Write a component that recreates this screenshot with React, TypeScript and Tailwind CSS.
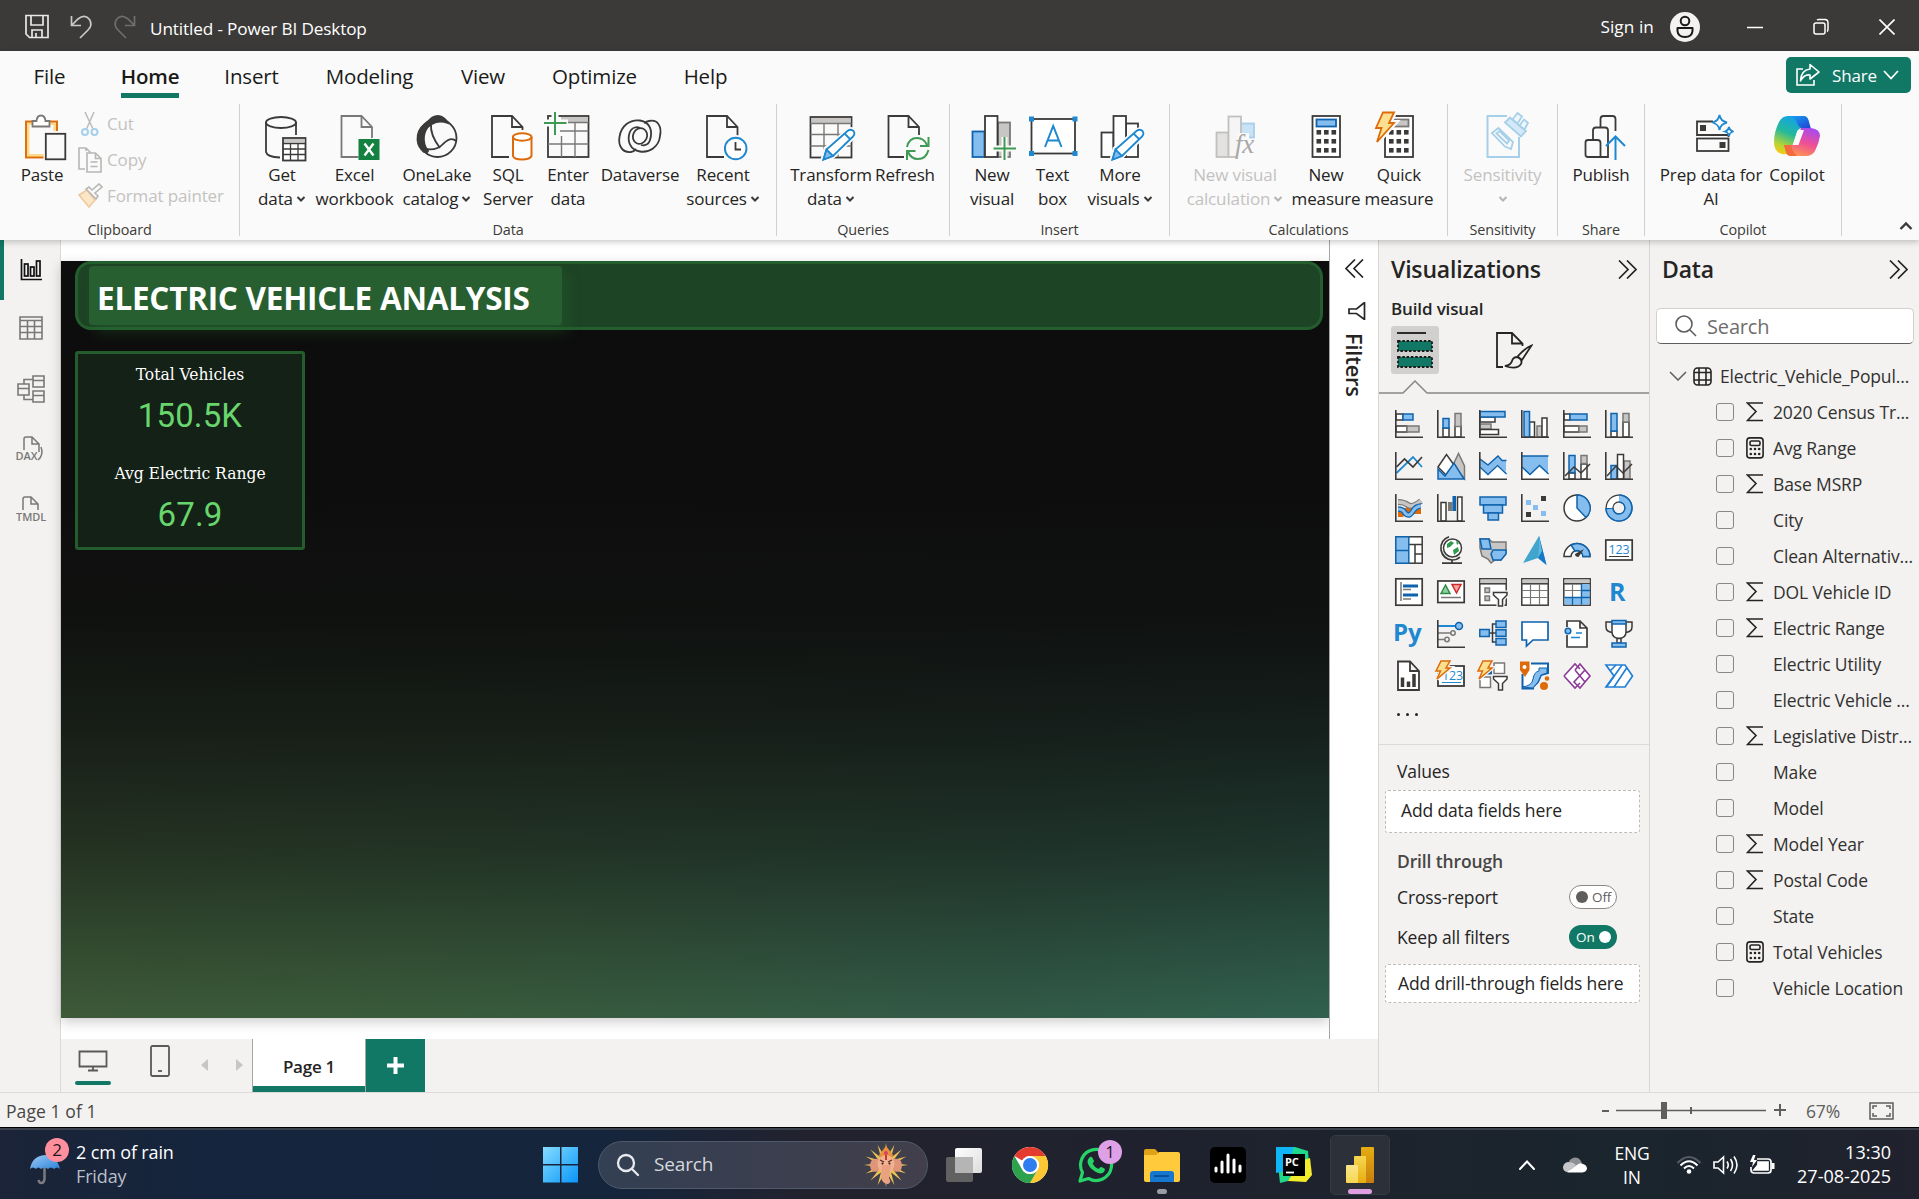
import React from "react";

type P = { children?: React.ReactNode };

const INK = "#3b3a39";
const BLUE = "#0f63ad";
const SKY = "#85beee";
const MID = "#1e88d0";
const GREY = "#7a7876";
const SILVER = "#c8c6c4";
const ORANGE = "#dd6b0a";

/* ---------- ribbon icons, 48 x 52 box ---------- */

const R = ({ children }: P) => (
  <svg width="48" height="52" viewBox="0 0 48 52" fill="none" stroke={INK} strokeWidth="1.8" className="shrink-0 overflow-visible">
    {children}
  </svg>
);

const Doc = ({ x, color = INK }: { x: number; color?: string }) => (
  <g stroke={color}>
    <path d={`M${x + 17} 46H${x}V5H${x + 20}L${x + 30.5} 16V27`} fill="none" />
    <path d={`M${x + 20} 5V16H${x + 30.5}`} />
  </g>
);

const Pencil = () => (
  <g>
    <path d="M16 49L19 38L41 20Q45 17 47 20Q49 23 46 26L26 45Z" fill="#fafafa" stroke="#fafafa" strokeWidth="5" />
    <path d="M16.500 48.500L19.500 38.500L40.500 20Q44 17.500 46.500 20Q48.500 23 46 25.500L26 45Z" fill="#fff" stroke={MID} strokeWidth="1.8" />
    <path d="M16.500 48.500L19.500 38.500L26 45Z" fill={SKY} stroke={MID} />
    <path d="M37.500 22.500L43.500 28.500" stroke={MID} />
  </g>
);

const PasteIcon = () => (
  <R>
    <rect x="9.500" y="12" width="28" height="33" fill="#fafafa" stroke="#fbd98b" strokeWidth="4" />
    <rect x="8" y="10.500" width="31" height="36" stroke={ORANGE} strokeWidth="1.900" />
    <path d="M14.500 15.500V10H18.500Q19 4.500 23 4.500T27.500 10H31.500V15.500Z" fill="#fff" stroke={GREY} />
    <rect x="25.500" y="20" width="24" height="31" fill="#fafafa" stroke="none" />
    <rect x="27.800" y="22.800" width="19.500" height="25.500" fill="#fafafa" />
  </R>
);
const GetDataIcon = () => (
  <R>
    <path d="M8 11V41Q9 46 22 46.500M38 11V24" />
    <ellipse cx="23" cy="11.500" rx="15" ry="5.500" />
    <rect x="25" y="27" width="22.500" height="22.500" fill="#fff" />
    <rect x="26" y="28" width="20.500" height="3.500" fill={SILVER} stroke="none" />
    <path d="M25 32.500H47.500M25 38H47.500M25 43.500H47.500M32.500 32.500V49M40 32.500V49" strokeWidth="1.300" />
  </R>
);
const ExcelIcon = () => (
  <R>
    <Doc x={10.5} color={GREY} />
    <rect x="27.500" y="28" width="21" height="21" fill="#13813f" stroke="none" />
    <path d="M33.500 32.500L42.500 44.500M42.500 32.500L33.500 44.500" stroke="#fff" strokeWidth="2.400" />
  </R>
);
const OneLakeIcon = () => (
  <R>
    <circle cx="24.500" cy="27" r="19" fill="#fafafa" />
    <path d="M14 12Q19 5 25 5Q32 6 34.500 12Q26 9 19 13Q14 16 12.500 19Z" fill={INK} />
    <path d="M12 13Q4 19 4.500 29Q5 36 11 41Q14 42 15 40Q10 34 11 25Q12 18 17 13Z" fill={INK} />
    <path d="M18 13Q17 24 27 37M12 38Q24 40 30 33Q38 25 43 30" />
  </R>
);
const SqlIcon = () => (
  <R>
    <Doc x={8} />
    <rect x="26" y="19" width="24" height="32" fill="#fafafa" stroke="none" />
    <path d="M29 26V45Q30 48.500 38 48.500T47.500 45V26" fill="#fff" stroke={ORANGE} strokeWidth="2" />
    <ellipse cx="38.200" cy="26" rx="9.300" ry="3.700" fill="#fff" stroke={ORANGE} strokeWidth="2" />
  </R>
);
const EnterIcon = () => (
  <R>
    <rect x="4" y="5" width="40.500" height="41" fill="#fafafa" />
    <rect x="17" y="6" width="27" height="5" fill={SILVER} stroke="none" />
    <path d="M4 33H44.500M16 20H44.500M17.500 25V46M31 12V46M17 11.500H44.500" stroke={GREY} strokeWidth="1.400" />
    <path d="M-1 12H24M11 0V26" stroke="#fafafa" strokeWidth="7" />
    <path d="M0 12H22.500M11 1V24" stroke="#3f9b54" strokeWidth="2" />
  </R>
);
const DataverseIcon = () => (
  <R>
    <g strokeWidth="1.800">
      <path d="M15 41C6 42 2 34 3.500 26C5 15 14 8 24 9.500C34 11 37 20 34 29C32 36 25 34 25 34" />
      <path d="M33 10C42 8 46 16 44 25C43 36 33 42 24 40.500C14 39 11 30 13.500 22C16 15 22 16 24 17" />
      <ellipse cx="24" cy="25" rx="7" ry="8" transform="rotate(25 24 25)" />
      <path d="M15 41C18 41 19 39 20 38M33 10C30 10 29 12 28.500 12.500" />
    </g>
  </R>
);
const RecentIcon = () => (
  <R>
    <Doc x={8} />
    <circle cx="36.700" cy="37.500" r="11" fill="#fff" stroke="#fafafa" strokeWidth="5" />
    <circle cx="36.700" cy="37.500" r="10.800" fill="#fff" stroke={MID} strokeWidth="1.900" />
    <path d="M36.500 31V38.500H42" />
  </R>
);
const TransformIcon = () => (
  <R>
    <rect x="3.500" y="6" width="41" height="40.500" fill="#fafafa" />
    <rect x="4.500" y="7" width="39" height="5" fill={SILVER} stroke="none" />
    <path d="M3.500 12.500H44.500M3.500 23.500H44.500M3.500 35H44.500M17 13V46M31 13V46" stroke={GREY} strokeWidth="1.400" />
    <Pencil />
  </R>
);
const RefreshIcon = () => (
  <R>
    <Doc x={7.5} />
    <rect x="23" y="24" width="27" height="28" fill="#fafafa" stroke="none" />
    <g stroke="#3f9b54" strokeWidth="2">
      <path d="M26 36Q28 27 36 27Q43 27 46 34M47.500 26V35H39" />
      <path d="M47.500 39Q45 48 37 48Q30 48 27 41M26 49V40H34.500" />
    </g>
  </R>
);
const NewVisualIcon = () => (
  <R>
    <rect x="30" y="11.500" width="12" height="34.500" fill={SILVER} stroke={GREY} />
    <rect x="4.500" y="20.500" width="12" height="25.500" fill={SKY} stroke={BLUE} />
    <rect x="17" y="5" width="12.500" height="41" fill="#fff" />
    <path d="M25 37.500H49M36.500 26V49" stroke="#fafafa" strokeWidth="6" />
    <path d="M25.500 37.500H48M36.500 26V49" stroke="#3f9b54" strokeWidth="2" />
  </R>
);
const TextBoxIcon = () => (
  <R>
    <rect x="2.500" y="8" width="43.500" height="34.500" fill="#fff" />
    {[[0, 5.5], [43.5, 5.5], [0, 40], [43.5, 40]].map(([x, y]) => (
      <rect key={`${x}-${y}`} x={x} y={y} width="5" height="5" fill={MID} stroke="none" />
    ))}
    <path d="M16 36L24.200 15L32.500 36M19 29.500H29.500" stroke={MID} strokeWidth="2" />
  </R>
);
const MoreVisualsIcon = () => (
  <R>
    <rect x="30" y="12.500" width="12" height="33.500" fill="#fff" />
    <rect x="5.500" y="21.500" width="12" height="24.500" fill="#fff" />
    <rect x="17.500" y="5" width="12.500" height="41" fill="#fff" />
    <Pencil />
  </R>
);
const VisualCalcIcon = () => (
  <R>
    <rect x="30" y="12.500" width="13" height="14" fill="#c8e2f6" stroke="#a9cfea" />
    <rect x="5.500" y="21.500" width="12" height="24.500" fill="#e3e2e1" stroke="#c1c0bf" />
    <rect x="17.500" y="5.500" width="12.500" height="40.500" fill="#f5f5f5" stroke="#c1c0bf" />
    <rect x="26" y="22" width="12" height="26" fill="#fafafa" stroke="none" />
    <text x="24" y="42" fontFamily="Liberation Serif" fontStyle="italic" fontSize="27" fill="#a9a8a7" stroke="none">fx</text>
  </R>
);
const Keys = ({ x, w }: { x: number; w: number }) => (
  <g fill={INK} stroke="none">
    {[19, 28, 37].map((y) => [0, 1, 2].map((c) => <rect key={`${y}-${c}`} x={x + c * w} y={y} width="4.600" height="4.600" />))}
  </g>
);
const MeasureIcon = () => (
  <R>
    <rect x="10.500" y="5" width="27.500" height="41" fill="#fff" />
    <rect x="14.500" y="8.500" width="19.500" height="7" fill={SKY} stroke={BLUE} />
    <Keys x={14.5} w={7.5} />
  </R>
);
const QuickIcon = () => (
  <R>
    <rect x="10" y="5" width="28" height="41" fill="#fff" />
    <rect x="18" y="8.500" width="15.500" height="7" fill={SILVER} stroke={GREY} />
    <Keys x={14} w={7.5} />
    <path d="M8 1.500H19L14 12H19L2 31L6.500 17H1Z" fill="#fafafa" stroke="#fafafa" strokeWidth="6" />
    <path d="M8 1.500H19L14 12H19L2 31L6.500 17H1Z" fill="#fde08f" stroke={ORANGE} strokeWidth="1.800" />
  </R>
);
const SensitivityIcon = () => (
  <R>
    <g stroke="#a6cfe9">
      <path d="M28 5H8.500V46H40V26" strokeWidth="2" />
      <path d="M13 22L19.500 17L34 31L32 38L26 35.500Z" fill="#fafafa" />
      <path d="M17.500 22.500L20.500 20L30 29.500L28 32.500Z" />
      <path d="M26 11.500L31 6.500L47 20L42 25.500Z" fill="#d3e9f7" />
      <path d="M33.500 8.500L38.500 2L43 5.500L38.500 12.500ZM40.500 14.500L45 8.500L49 12L45.500 18.500Z" fill="#eef7fd" />
    </g>
  </R>
);
const PublishIcon = () => (
  <R>
    <path d="M31 46H11Q8.500 46 8.500 43.500V31.500Q8.500 29 11 29H20.500Q23.500 29 23.500 32V46" />
    <path d="M16 28.500V19.500Q16 16.500 19 16.500H28Q31 16.500 31 19.500V46H24" />
    <path d="M23.500 16V8Q23.500 5 26.500 5H35.500Q38.500 5 38.500 8V20" />
    <path d="M38.500 49V26M29 35L38.500 25.500L48 35" stroke={MID} strokeWidth="2" />
  </R>
);
const PrepIcon = () => (
  <R>
    <path d="M26 10.500H10V24H41.500V26" />
    <rect x="10" y="27.500" width="31.500" height="12.500" />
    <rect x="13" y="14" width="6" height="6" fill={INK} stroke="none" />
    <rect x="32.500" y="31" width="6" height="6" fill={INK} stroke="none" />
    <path d="M32.500 4Q33.500 10 40 11.500Q33.500 13 32.500 19Q31.500 13 25.500 11.500Q31.500 10 32.500 4Z" fill="#fff" stroke={MID} />
    <path d="M42 16Q42.500 19.500 46.500 20.500Q42.500 21.500 42 25Q41.500 21.500 38 20.500Q41.500 19.500 42 16Z" fill="#fff" stroke={MID} />
  </R>
);
const CopilotIcon = () => (
  <svg width="48" height="52" viewBox="0 0 48 52" className="shrink-0">
    <defs>
      <linearGradient id="cpA" x1="0.600" y1="0" x2="0.200" y2="1">
        <stop offset="0" stopColor="#12a0f0" /><stop offset="0.450" stopColor="#25b99b" /><stop offset="0.800" stopColor="#b9d432" /><stop offset="1" stopColor="#f8c90f" />
      </linearGradient>
      <linearGradient id="cpB" x1="0.700" y1="0" x2="0.300" y2="1">
        <stop offset="0" stopColor="#a749f2" /><stop offset="0.500" stopColor="#ee4f95" /><stop offset="1" stopColor="#ff9a4e" />
      </linearGradient>
      <linearGradient id="cpC" x1="0" y1="0" x2="1" y2="1">
        <stop offset="0" stopColor="#18a5f4" /><stop offset="1" stopColor="#1e3fd0" />
      </linearGradient>
    </defs>
    <path d="M15 5H31Q34 5 35 9L37 17H30Q25 17 23.500 22L18 41Q15 44 9 43Q1 41 1 31Q1 21 6 11Q9 5 15 5Z" fill="url(#cpA)" />
    <path d="M15 5H30Q34 5 35.500 9L38 18H31Q26 17 24 12Q22 6 15 5Z" fill="url(#cpC)" />
    <path d="M33 45H18Q14 45 13 41L11 34H18Q23 33 24.500 28L28 17H38Q47 18 47 25Q46 32 42 40Q39 45 33 45Z" fill="url(#cpB)" />
    <path d="M11 34H18Q19 40 24 45H18Q14 45 13 41Z" fill="#f36a3c" />
    <path d="M25 19H31L25.500 34H19.500Z" fill="#fafafa" />
  </svg>
);

const Caret = ({ muted = false }: { muted?: boolean }) => (
  <svg width="10" height="8" viewBox="0 0 10 8" fill="none" stroke={muted ? "#b5b4b3" : INK} strokeWidth="2" className="shrink-0">
    <path d="M1.500 2L5 5.500L8.500 2" />
  </svg>
);

type Cmd = { w: string; icon: React.ReactNode; l1: string; l2?: string; caret?: boolean; muted?: boolean };

const Command = ({ w, icon, l1, l2, caret, muted }: Cmd) => (
  <div className={`flex shrink-0 flex-col items-center whitespace-nowrap text-[17px] leading-6 ${w} ${muted ? "text-[#c4c2c0]" : "text-[#252423]"}`}>
    {icon}
    <div>{l1}</div>
    {(l2 || caret) && (
      <div className="flex h-6 items-center gap-[3px]">
        {l2}
        {caret && <Caret muted={muted} />}
      </div>
    )}
  </div>
);

const Group = ({ w, pad = "", label, children }: P & { w: string; pad?: string; label: string }) => (
  <section className={`flex h-[132px] shrink-0 flex-col border-r border-[#d2d0ce] ${w}`}>
    <div className={`flex h-[119px] pt-[7px] ${pad}`}>{children}</div>
    <div className="flex h-[13px] items-center justify-center text-[14.400px] text-[#3b3a39]">{label}</div>
  </section>
);

const CutIcon = () => (
  <svg width="26" height="26" viewBox="0 0 26 26" fill="none" strokeWidth="1.500">
    <path d="M8 1L16 18M17 1L9.500 18" stroke="#bdbbb9" />
    <circle cx="8" cy="21" r="3" stroke="#a6cfe9" strokeWidth="2" /><circle cx="17.500" cy="21" r="3" stroke="#a6cfe9" strokeWidth="2" />
  </svg>
);
const CopyIcon = () => (
  <svg width="26" height="26" viewBox="0 0 26 26" fill="none" stroke="#b9b7b5" strokeWidth="1.600">
    <path d="M8 22H2V1H9L13 5V6M9 1V4" />
    <path d="M10 6H18.500L24 11.500V25H10ZM18.500 6V11.500H24M13.500 15H20.500M13.500 19.500H20.500" fill="#fafafa" />
  </svg>
);
const PainterIcon = () => (
  <svg width="26" height="26" viewBox="0 0 26 26" fill="none" strokeWidth="1.600">
    <path d="M2 12L12 24L18 17L10 7Z" fill="#fbe7c6" stroke="#f0c8a2" />
    <path d="M9 6L19 16L21 13L18 10L25 4L22 1L15 7L12 4Z" fill="#fafafa" stroke="#b9b7b5" />
  </svg>
);

const Ribbon = () => (
  <div className="flex h-[138px] items-start">
    <Group w="w-[240px]" pad="pl-[10px]" label="Clipboard">
      <Command w="w-16" icon={<PasteIcon />} l1="Paste" />
      <div className="flex flex-col gap-[10px] pl-[3px] text-[17px] text-[#c4c2c0]">
        <div className="flex h-[26px] items-center gap-1"><CutIcon />Cut</div>
        <div className="flex h-[26px] items-center gap-1"><CopyIcon />Copy</div>
        <div className="flex h-[26px] items-center gap-1 whitespace-nowrap"><PainterIcon />Format painter</div>
      </div>
    </Group>
    <Group w="w-[537px]" pad="pl-[6px]" label="Data">
      <Command w="w-[72px]" icon={<GetDataIcon />} l1="Get" l2="data" caret />
      <Command w="w-[73px]" icon={<ExcelIcon />} l1="Excel" l2="workbook" />
      <Command w="w-[92px]" icon={<OneLakeIcon />} l1="OneLake" l2="catalog" caret />
      <Command w="w-[50px]" icon={<SqlIcon />} l1="SQL" l2="Server" />
      <Command w="w-[70px]" icon={<EnterIcon />} l1="Enter" l2="data" />
      <Command w="w-[74px]" icon={<DataverseIcon />} l1="Dataverse" />
      <Command w="w-[92px]" icon={<RecentIcon />} l1="Recent" l2="sources" caret />
    </Group>
    <Group w="w-[173px]" pad="pl-[10px]" label="Queries">
      <Command w="w-[88px]" icon={<TransformIcon />} l1="Transform" l2="data" caret />
      <Command w="w-[60px]" icon={<RefreshIcon />} l1="Refresh" />
    </Group>
    <Group w="w-[220px]" pad="pl-3" label="Insert">
      <Command w="w-[60px]" icon={<NewVisualIcon />} l1="New" l2="visual" />
      <Command w="w-[61px]" icon={<TextBoxIcon />} l1="Text" l2="box" />
      <Command w="w-[74px]" icon={<MoreVisualsIcon />} l1="More" l2="visuals" caret />
    </Group>
    <Group w="w-[278px]" pad="pl-[10px]" label="Calculations">
      <Command w="w-[110px]" icon={<VisualCalcIcon />} l1="New visual" l2="calculation" caret muted />
      <Command w="w-[72px]" icon={<MeasureIcon />} l1="New" l2="measure" />
      <Command w="w-[74px]" icon={<QuickIcon />} l1="Quick" l2="measure" />
    </Group>
    <Group w="w-[110px]" label="Sensitivity">
      <Command w="w-[109px]" icon={<SensitivityIcon />} l1="Sensitivity" caret muted />
    </Group>
    <Group w="w-[87px]" label="Share">
      <Command w="w-[86px]" icon={<PublishIcon />} l1="Publish" />
    </Group>
    <Group w="w-[197px]" pad="pl-[9px]" label="Copilot">
      <Command w="w-[114px]" icon={<PrepIcon />} l1="Prep data for" l2="AI" />
      <Command w="w-[58px]" icon={<CopilotIcon />} l1="Copilot" />
    </Group>
    <div className="flex flex-1 justify-end pt-[117px] pr-[6px]">
      <svg width="14" height="10" viewBox="0 0 14 10" fill="none" stroke={INK} strokeWidth="2.400"><path d="M1.500 8L7 2.500L12.500 8" /></svg>
    </div>
  </div>
);

const tabs = [
  { name: "File", w: "w-[99px]" },
  { name: "Home", w: "w-[102px]" },
  { name: "Insert", w: "w-[101px]" },
  { name: "Modeling", w: "w-[135px]" },
  { name: "View", w: "w-[92px]" },
  { name: "Optimize", w: "w-[131px]" },
  { name: "Help", w: "w-[91px]" },
];

const TitleBar = () => (
  <header className="flex h-[51px] shrink-0 items-center bg-[#3b3a38] text-[17.200px] text-white">
    <svg width="115" height="30" viewBox="0 0 115 30" fill="none" stroke="#e8e8e8" strokeWidth="1.700" className="ml-6">
      <path d="M2 4.500H24V26.500H5.500L2 23ZM7 4.500V14H19V4.500M8 26.500V19H18V26.500M12 26V22" />
      <path d="M47.500 5V14.500H57M48 14L54 8Q61 2.500 65.500 8.500Q69 14 64 19L56 27" stroke="#c9c9c9" />
      <path d="M110.500 5V14.500H101M110 14L104 8Q97 2.500 92.500 8.500Q89 14 94 19L102 27" stroke="#6f6e6d" />
    </svg>
    <div className="ml-[11px] pt-[7px]">Untitled - Power BI Desktop</div>
    <div className="ml-auto flex items-center pt-0.5">
      <span className="tracking-[0.005em]!">Sign in</span>
      <svg width="30" height="30" viewBox="0 0 30 30" className="ml-4">
        <circle cx="15" cy="15" r="15" fill="#f3f2f1" />
        <circle cx="15" cy="9" r="4.300" fill="none" stroke="#1b1a19" strokeWidth="2" />
        <path d="M7.500 16H22.500V19Q22 25 15 25T7.500 19Z" fill="none" stroke="#1b1a19" strokeWidth="2" strokeLinejoin="round" />
      </svg>
      <svg width="16" height="16" viewBox="0 0 16 16" stroke="#fff" strokeWidth="1.500" className="ml-[47px]"><path d="M0 8.500H16" /></svg>
      <svg width="16" height="18" viewBox="0 0 16 18" fill="none" stroke="#fff" strokeWidth="1.500" className="ml-[50px]">
        <rect x="1" y="5" width="11" height="11" rx="2" /><path d="M4 2Q4.500 1.500 6 1.500H12Q15 1.500 15 5V11Q15 13 14 13.500" />
      </svg>
      <svg width="16" height="16" viewBox="0 0 16 16" stroke="#fff" strokeWidth="1.600" className="mr-6 ml-[50px]"><path d="M0.500 0.500L15.500 15.500M15.500 0.500L0.500 15.500" /></svg>
    </div>
  </header>
);

const TabBar = () => (
  <nav className="flex h-[54px] items-start text-[20.500px] text-[#1b1a19]">
    {tabs.map((t) => (
      <div key={t.name} className={`flex flex-col items-center ${t.w}`}>
        <span className={`flex h-[42px] items-center pt-[8px] ${t.name === "Home" ? "font-semibold" : ""}`}>{t.name}</span>
        {t.name === "Home" && <div className="h-[5px] w-[58px] bg-[#117865]" />}
      </div>
    ))}
    <button className="mt-[6px] mr-[8px] ml-auto flex h-9 w-[125px] items-center rounded-[5px] bg-[#117865] pl-[10px] text-[17px] text-white">
      <svg width="24" height="24" viewBox="0 0 24 24" fill="none" stroke="#fff" strokeWidth="1.600">
        <path d="M7 6H1V22H18V17" /><path d="M14 1.500L23 9L14 16V12Q8 11 4.500 18Q5 7 14 6Z" strokeLinejoin="round" />
      </svg>
      <span className="ml-[12px] pt-px">Share</span>
      <svg width="16" height="10" viewBox="0 0 16 10" fill="none" stroke="#fff" strokeWidth="1.800" className="ml-[6px]"><path d="M1 1L8 8.500L15 1" /></svg>
    </button>
  </nav>
);

/* ---------- left rail ---------- */

const Rail = () => (
  <aside className="flex w-[61px] shrink-0 flex-col border-r border-[#dcdad8] bg-[#f3f2f1]">
    <div className="flex h-[60px] items-center justify-center border-l-4 border-[#117865] pr-[3px] pb-px">
      <svg width="22" height="22" viewBox="0 0 22 22" fill="none" stroke="#111" strokeWidth="1.700">
        <path d="M1.500 0V20.500H22" /><rect x="4.500" y="5" width="3.500" height="12" /><rect x="10.500" y="8" width="3.500" height="9" /><rect x="16.500" y="2" width="3.500" height="15" />
      </svg>
    </div>
    <div className="flex h-[60px] items-center justify-center pb-1 pl-0.5">
      <svg width="24" height="24" viewBox="0 0 24 24" fill="none" stroke={GREY} strokeWidth="1.600">
        <path d="M1 1H23V23H1ZM1 4.500H23M1 10.500H23M1 16.500H23M8.500 4V23M15.500 4V23" />
      </svg>
    </div>
    <div className="flex h-[60px] items-center justify-center pb-[3px] pl-0.5">
      <svg width="28" height="28" viewBox="0 0 28 28" fill="none" stroke={GREY} strokeWidth="1.600">
        <path d="M1 9H12V20H1ZM1 13.500H12M16 1H27V12H16ZM16 5.500H27M16 16H27V27H16ZM16 20.500H27M7 9V4.500H16M7 20V24.500H16" />
      </svg>
    </div>
    <div className="flex h-[60px] items-center justify-center pb-0.5">
      <svg width="28" height="28" viewBox="0 0 28 28" fill="none" stroke={GREY} strokeWidth="1.500" className="overflow-visible">
        <path d="M8 15V4Q8 2 10 2H16L23 9V17M16 2V9H23M25 12Q28 20 22 25" />
        <text x="-0.500" y="25" fontFamily="Open Sans" fontSize="11" fontWeight="600" fill={GREY} stroke="none">DAX</text>
      </svg>
    </div>
    <div className="flex h-[60px] items-center justify-center pb-[3px]">
      <svg width="30" height="28" viewBox="0 0 30 28" fill="none" stroke={GREY} strokeWidth="1.500" className="overflow-visible">
        <path d="M8 15V4Q8 2 10 2H16L23 9V15M16 2V9H23" />
        <text x="1" y="25.500" fontFamily="Open Sans" fontSize="11" fontWeight="600" fill={GREY} stroke="none">TMDL</text>
      </svg>
    </div>
  </aside>
);

/* ---------- report canvas ---------- */

const Stat = ({ label, value }: { label: string; value: string }) => (
  <div className="flex h-[99px] shrink-0 flex-col items-center">
    <div className="h-[26px] font-['DejaVu_Serif_Condensed','DejaVu_Serif',serif] text-[17.300px] leading-[26px] tracking-[0]! text-white">{label}</div>
    <div className="mt-[7px] h-[44px] font-['Roboto',sans-serif] text-[33px] leading-[44px] tracking-[0.004em]! text-[#68d56d]">{value}</div>
  </div>
);

const Canvas = () => (
  <div className="h-[799px] bg-white py-[21px]">
    <div className="flex h-[757px] flex-col bg-[linear-gradient(to_bottom,#0d0d0d_0%,#0d0d0d_30%,rgba(13,13,13,0.940)_48%,rgba(13,13,13,0.790)_62%,rgba(13,13,13,0.540)_78%,rgba(13,13,13,0.250)_91%,rgba(13,13,13,0.060)_100%),linear-gradient(to_right,#405f3b_0%,#3b6040_35%,#345f4b_75%,#336653_100%)] pl-[14px] shadow-[0_4px_12px_rgba(0,0,0,0.200)]">
      <div className="flex h-[69px] w-[1248px] items-center rounded-[16px] border-[3px] border-[#245e2e] bg-[#1d4425] pl-[11px]">
        <div className="flex h-[59px] w-[473px] items-center rounded-[4px] bg-[#275f30] pt-1 pl-[8px] text-[31.500px] font-bold tracking-[-0.008em]! whitespace-nowrap text-white shadow-[6px_8px_14px_rgba(39,110,50,0.300)]">
          ELECTRIC VEHICLE ANALYSIS
        </div>
      </div>
      <div className="mt-[21px] flex h-[199px] w-[230px] flex-col rounded-[3px] border-[3px] border-[#245c2d] bg-[#142116] pt-[7px]">
        <Stat label="Total Vehicles" value="150.5K" />
        <Stat label="Avg Electric Range" value="67.9" />
      </div>
    </div>
  </div>
);

const PageTabs = () => (
  <div className="flex h-[53px] bg-[#f3f2f1]">
    <div className="flex w-[191px] shrink-0 items-start">
      <div className="ml-[14px] flex w-9 flex-col items-center pt-[11px]">
        <svg width="30" height="22" viewBox="0 0 30 22" fill="none" stroke="#5b5957" strokeWidth="1.800"><path d="M1.500 1.500H28.500V16.500H1.500ZM10 20.500H20M15 17V20" /></svg>
        <div className="mt-[9px] h-1 w-9 rounded-sm bg-[#117865]" />
      </div>
      <svg width="20" height="32" viewBox="0 0 20 32" fill="none" stroke="#5b5957" strokeWidth="1.800" className="mt-[6px] ml-[39px]"><rect x="1" y="1" width="18" height="30" rx="1.500" /><path d="M8 26H12" /></svg>
      <svg width="42" height="12" viewBox="0 0 42 12" fill="#c8c6c4" className="mt-[20px] ml-[31px]"><path d="M7 0V12L0 6ZM35 0V12L42 6Z" /></svg>
    </div>
    <div className="flex w-[114px] flex-col border-x border-[#a8a6a4] bg-white">
      <div className="flex h-[47px] items-center justify-center pt-[8px] text-[17px] font-semibold tracking-[-0.015em]! text-[#252423]">Page 1</div>
      <div className="h-[6px] bg-[#117865]" />
    </div>
    <div className="flex w-[59px] items-center justify-center bg-[#117865]">
      <svg width="17" height="17" viewBox="0 0 17 17" stroke="#fff" strokeWidth="4"><path d="M8.500 0V17M0 8.500H17" /></svg>
    </div>
  </div>
);

/* ---------- right panes ---------- */

const Chevrons = ({ flip = false }: { flip?: boolean }) => (
  <svg width="19" height="19" viewBox="0 0 19 19" fill="none" stroke="#252423" strokeWidth="1.700" className={flip ? "rotate-180" : ""}>
    <path d="M1 0.500L10 9.500L1 18.500M9 0.500L18 9.500L9 18.500" />
  </svg>
);

const Filters = () => (
  <div className="flex w-[49px] shrink-0 flex-col items-center border-l-[1.500px] border-[#a8a6a4] bg-white pt-[19px]">
    <Chevrons flip />
    <svg width="18" height="18" viewBox="0 0 18 18" fill="none" stroke="#252423" strokeWidth="1.700" className="mt-[24px] ml-[6px]">
      <path d="M16.500 0.500V17.500L8.500 11.500H1V7H8.500Z" />
    </svg>
    <div className="mt-[13px] text-[21.800px] leading-6 font-semibold text-[#252423] [writing-mode:vertical-rl]">Filters</div>
  </div>
);

/* visual gallery icons, 28 x 28 box */
const V = ({ children }: P) => (
  <svg width="28" height="28" viewBox="0 0 28 28" fill="none" stroke={INK} strokeWidth="1.500" className="overflow-visible">{children}</svg>
);
const Axis = () => <path d="M0.800 0V27.200H28" strokeWidth="1.600" />;
const Bar = ({ b, c = "w" }: { b: number[]; c?: "w" | "b" | "g" }) => (
  <rect x={b[0]} y={b[1]} width={b[2]} height={b[3]} fill={c === "b" ? SKY : c === "g" ? SILVER : "#fff"} stroke={c === "b" ? BLUE : c === "g" ? GREY : INK} />
);
const Grid = () => (
  <g>
    <rect x="0.800" y="0.800" width="26.400" height="26.400" fill="#fff" />
    <rect x="1.500" y="1.500" width="25" height="4" fill={SILVER} stroke="none" />
    <path d="M1 5.800H27" />
    <path d="M1 12.500H27M1 19.500H27M9.500 6V27M18.500 6V27" stroke={GREY} strokeWidth="1.200" />
  </g>
);
const MiniBolt = () => (
  <g>
    <path d="M4 -1H13L9 6H13L0 17L3.500 9H-1Z" fill="#f3f2f1" stroke="#f3f2f1" strokeWidth="4" />
    <path d="M4 -1H13L9 6H13L0 17L3.500 9H-1Z" fill="#fde08f" stroke={ORANGE} strokeWidth="1.500" />
  </g>
);
const MiniFunnel = () => (
  <g>
    <path d="M14.500 14.500H28V17L23.500 21.500V28H19.500V21.500L14.500 17Z" fill="#fff" stroke="#f3f2f1" strokeWidth="4" />
    <path d="M14.500 14.500H28V17L23.500 21.500V28H19.500V21.500L14.500 17Z" fill="#fff" />
  </g>
);

const gallery: React.ReactNode[] = [
  <V><Bar b={[1, 4, 7, 6]} /><Bar b={[8, 4, 10, 6]} c="b" /><Bar b={[1, 16, 11, 6]} /><Bar b={[12, 16, 12, 6]} c="g" /><Axis /></V>,
  <V><Bar b={[6, 18, 6, 9]} /><Bar b={[6, 8.5, 6, 9.5]} c="b" /><Bar b={[18, 16, 6, 11]} /><Bar b={[18, 3.5, 6, 13]} c="g" /><Axis /></V>,
  <V><Bar b={[1, 7, 15, 5]} /><Bar b={[1, 1.5, 25, 5.5]} c="b" /><Bar b={[1, 14, 11, 5]} c="g" /><Bar b={[1, 19.5, 18.5, 5]} /><Axis /></V>,
  <V><Bar b={[8.5, 12, 5, 15]} /><Bar b={[3, 1.5, 5.5, 25.5]} c="b" /><Bar b={[16, 16, 5, 11]} c="g" /><Bar b={[21, 8, 5, 19]} /><Axis /></V>,
  <V><Bar b={[1, 4, 6, 6]} /><Bar b={[7, 4, 17, 6]} c="b" /><Bar b={[1, 16, 15, 6]} /><Bar b={[16, 16, 8, 6]} c="g" /><Axis /></V>,
  <V><Bar b={[6, 21, 6, 6]} /><Bar b={[6, 3.5, 6, 17.5]} c="b" /><Bar b={[18, 12, 6, 15]} /><Bar b={[18, 3.5, 6, 8.5]} c="g" /><Axis /></V>,

  <V><path d="M1.500 21L18 5L27 15" stroke={MID} strokeWidth="1.800" /><path d="M1.500 15L9.500 7L18 15L27 5" strokeWidth="1.700" /><Axis /></V>,
  <V><path d="M16 13L21.500 1.500L27.500 14V27Z" fill={SILVER} stroke={GREY} /><path d="M1 15L9.500 2.500L17 13L9 23Z" fill="#fff" /><path d="M1 17L8 24L17 11L27 27H1Z" fill={SKY} stroke={BLUE} /></V>,
  <V><path d="M1 15L9 22L19 13L27 22V27H1Z" fill="#fff" stroke="none" /><path d="M1 7L9 14L18 4L23 9H27V20L18 12.500L9 22L1 14Z" fill={SKY} stroke="none" /><path d="M1 7L9 13L19 4L23 8.500H27.500M1 15L9 22.500L18.500 13.500L27.500 22" stroke={BLUE} /><Axis /></V>,
  <V><path d="M1 15L9 23L18 14L27 22V27H1Z" fill="#fff" stroke="none" /><path d="M1 4H27V22L18 14L9 22.500L1 15Z" fill={SKY} stroke="none" /><path d="M1 4H27.500M1 15L9 22.500L18.500 13.500L27.500 22" stroke={BLUE} /><Axis /></V>,
  <V><Bar b={[6, 21, 6, 6]} /><Bar b={[6, 3.5, 6, 17]} c="b" /><Bar b={[18, 12, 6, 15]} /><Bar b={[18, 3.5, 6, 8]} c="g" /><path d="M2 24L11 15L18 21L27 12" /><Axis /></V>,
  <V><Bar b={[19, 9, 6, 18]} c="g" /><Bar b={[6, 13.5, 6, 13.5]} c="b" /><Bar b={[12.5, 2.5, 6, 24.5]} /><path d="M2 24L11 14L18 21L27 12" /><Axis /></V>,

  <V><path d="M3 21H7Q14 10 20 17H26M3 18H26" stroke={ORANGE} strokeWidth="4" /><path d="M3 8Q9 8 13 11T26 7" stroke={GREY} strokeWidth="6" /><path d="M3 8Q9 8 13 11T26 7" stroke={SILVER} strokeWidth="3.500" /><path d="M3 15Q8 15 10 19Q14 24 18 17Q21 12 26 12" stroke={BLUE} strokeWidth="5.500" /><path d="M3 15Q8 15 10 19Q14 24 18 17Q21 12 26 12" stroke={SKY} strokeWidth="3" /><Axis /></V>,
  <V><Bar b={[4, 8.5, 5, 18.5]} /><rect x="11" y="8" width="4.500" height="9" fill={GREY} stroke="none" /><rect x="15.500" y="2" width="3.500" height="15" fill={BLUE} stroke="none" /><Bar b={[20.5, 3, 4.5, 24]} /><Axis /></V>,
  <V><Bar b={[1, 3, 26, 8]} c="b" /><Bar b={[4.5, 11, 19, 8]} c="b" /><Bar b={[9, 19, 10.5, 7]} c="b" /></V>,
  <V><g stroke="none"><rect x="5" y="6" width="5" height="5" fill={SKY} /><rect x="12" y="11" width="5" height="5" fill={SKY} /><rect x="20" y="17" width="5" height="5" fill={SKY} /><rect x="20" y="2" width="5" height="5" fill={INK} /><rect x="5" y="18" width="5" height="5" fill={INK} /></g><Axis /></V>,
  <V><circle cx="14" cy="14" r="13" fill="#fff" /><path d="M14 1A13 13 0 0 1 23 23.500L14 14Z" fill={SKY} stroke={BLUE} /></V>,
  <V><circle cx="14" cy="14" r="9.500" stroke={INK} strokeWidth="8" /><circle cx="14" cy="14" r="9.500" stroke="#fff" strokeWidth="5.500" /><path d="M14 4.500A9.500 9.500 0 1 1 4.500 14" stroke={BLUE} strokeWidth="8.500" /><path d="M14 4.500A9.500 9.500 0 1 1 4.500 15" stroke={SKY} strokeWidth="5.500" /></V>,

  <V><rect x="0.800" y="0.800" width="26.400" height="26.400" fill="#fff" /><path d="M14 8.500H27M20 8.500V27M20 18H27" /><Bar b={[0.8, 0.8, 13, 26.4]} c="b" /><path d="M1 14.500H14" stroke={BLUE} /></V>,
  <V><circle cx="15.500" cy="12" r="9" fill="#fff" /><path d="M10 8L14 5L17 7L13 11L10 12ZM16 14L21 11L22 15L17 19ZM19 5L22 7L20 9Z" fill="#2f9a4c" stroke="none" /><path d="M12 0.800Q3 4 4 14Q6 23 15 24Q20 24 23 21M15 24V27M5 27.200H25" strokeWidth="1.700" /></V>,
  <V><path d="M1 3H10L13 6H27V17L22 24H16L12 27L9 23L3 20L1 12Z" fill={SILVER} stroke={GREY} /><path d="M1 3H10L12 13H3Z" fill={SKY} stroke={BLUE} /><path d="M14 14H27V18L22 24H14L12 18Z" fill={SKY} stroke={BLUE} /></V>,
  <V><path d="M18 0L25.500 29L17 22L2 27Z" fill="#41a5cd" stroke="none" /><path d="M18 0L25.500 29L17 22Z" fill="#1877c9" stroke="none" /><path d="M18 0L21 15L17 22Z" fill="#5dbbd8" stroke="none" /></V>,
  <V><path d="M1 20.500A13 13 0 0 1 27 20.500H20A6 6 0 0 0 8 20.500Z" fill="#fff" /><path d="M8 9A13 13 0 0 1 27 20.500H20A6 6 0 0 0 12 15Z" fill={SKY} stroke={BLUE} /><path d="M21 13L12 18Q12 21 15.500 21Z" fill={INK} stroke="none" /></V>,
  <V><rect x="0.800" y="4" width="26.400" height="20" fill="#fff" strokeWidth="1.700" /><text x="3.500" y="18" fontFamily="Open Sans" fontSize="12.500" fill={MID} stroke="none">123</text><path d="M4 20.500H24" strokeWidth="1" /></V>,

  <V><rect x="0.800" y="0.800" width="26.400" height="26.400" fill="#fff" strokeWidth="1.700" /><path d="M6 4V23M8 11.500H16M8 21H16" stroke={GREY} /><path d="M8 8H23M8 17H23" stroke={BLUE} strokeWidth="3" /></V>,
  <V><rect x="0.800" y="3" width="26.400" height="21.500" fill="#fff" strokeWidth="1.700" /><path d="M4 15.500L8.500 7L13 15.500Z" fill="#8fd19a" stroke="#2f8a47" /><path d="M15 6.500H24L19.500 15Z" fill="#f5a3a3" stroke="#cc2a2a" /><path d="M4 19.500H24" stroke={GREY} /></V>,
  <V><rect x="0.800" y="0.800" width="26.400" height="26.400" fill="#fff" /><rect x="1.500" y="1.500" width="25" height="4" fill={SILVER} stroke="none" /><path d="M1 5.800H27" /><rect x="6" y="10" width="4.500" height="4.500" fill={SILVER} stroke={GREY} /><rect x="6" y="18" width="4.500" height="4.500" fill={SILVER} stroke={GREY} /><MiniFunnel /></V>,
  <V><Grid /></V>,
  <V><Grid /><path d="M18.500 6H26.500V26.500H1.500V19.500H18.500Z" fill={SKY} stroke="none" /><path d="M18.500 6V26.500M18.500 12.500H27M1.500 19.500H27M9.500 19.500V27" stroke={BLUE} strokeWidth="1.300" /></V>,
  <V><text x="4" y="23" fontFamily="Open Sans" fontSize="25" fontWeight="700" fill={MID} stroke="none">R</text></V>,

  <V><text x="-2" y="21" fontFamily="Open Sans" fontSize="24" fontWeight="700" fill={MID} stroke="none">Py</text></V>,
  <V><path d="M1 6H18" stroke={MID} strokeWidth="2" /><path d="M1 13H14M1 19.500H8" stroke={GREY} /><circle cx="22" cy="6" r="3.500" fill={SKY} stroke={BLUE} /><circle cx="16" cy="13" r="2.200" stroke={GREY} /><circle cx="10" cy="19.500" r="2.200" stroke={GREY} /><Axis /></V>,
  <V><path d="M10 13H17M17 4H13.500V22H17" /><Bar b={[0.8, 9.5, 9.5, 7]} c="b" /><Bar b={[17, 1, 10, 6.5]} c="b" /><Bar b={[17, 9.8, 10, 6.5]} c="b" /><Bar b={[17, 18.5, 10, 6.5]} c="b" /></V>,
  <V><path d="M1 2H27V20H12L5.500 26V20H1Z" fill="#fff" stroke={BLUE} strokeWidth="1.700" /></V>,
  <V><path d="M4 7V1H17L24 8V27H4V15M17 1V8H24" fill="#fff" strokeWidth="1.700" /><path d="M13 13H19M8 17.500H17" stroke={MID} /><circle cx="5" cy="11" r="2.800" fill={SKY} stroke={BLUE} /></V>,
  <V><path d="M7 2H1V7Q1 12 8 12.500M21 2H27V7Q27 12 20 12.500" /><path d="M7 3H21V12Q21 18 14 18.500Q7 18 7 12Z" fill="#fff" /><path d="M12 18.500H16V23H12Z" fill="#fff" /><Bar b={[7, 0.5, 14, 3.5]} c="b" /><Bar b={[7, 23, 14, 4]} c="b" /></V>,

  <V><path d="M3 -0.500H15L24 9V28H3ZM15 -0.500V9H24" fill="#fff" strokeWidth="1.800" /><path d="M7.500 15.500V25M13.500 19.500V25M19 12V25" strokeWidth="3.500" /></V>,
  <V><rect x="1" y="4" width="26" height="20" fill="#fff" strokeWidth="1.800" /><text x="5" y="18" fontFamily="Open Sans" fontSize="12.500" fill={MID} stroke="none">123</text><path d="M5 20.500H24" strokeWidth="1" stroke={MID} /><MiniBolt /></V>,
  <V><rect x="15" y="1" width="10.500" height="10.500" fill="#fff" stroke={GREY} /><rect x="1" y="15" width="10.500" height="10.500" fill="#fff" stroke={GREY} /><path d="M8 11.500H12V6" stroke={BLUE} strokeWidth="2" /><MiniBolt /><MiniFunnel /></V>,
  <V><path d="M10 1.500H27V11L20 13L17 20L12 25V26.500H1.500V12" fill="#fff" stroke={BLUE} strokeWidth="2" /><path d="M1 25Q11 24 12 17Q13 10 18 9V6H26V11L20 13L17 20L12 26Z" fill={SKY} stroke={BLUE} strokeWidth="1" /><path d="M4 15L-1 8V-0.500H8.500V8Z" fill={ORANGE} stroke="none" /><circle cx="3.500" cy="5" r="2" fill="#fff" stroke="none" /><circle cx="23" cy="24" r="4" fill={ORANGE} stroke="none" /><circle cx="26" cy="16.500" r="2.300" fill={ORANGE} stroke="none" /></V>,
  <V><path d="M1 14L11.500 2H15L27 14L15.500 26H11.500Z" fill="#fff" stroke="none" /><path d="M1 14L12 2L17 7M1 14L12 26L17 21M12 8L17 2L27 14L17 26L11 20L22 8M12 8L22 20" stroke="#8b3a96" strokeWidth="1.600" /></V>,
  <V><path d="M1 3H20L27.500 14L20 25H1L9 14Z" fill="#fff" stroke="#1f7fd6" strokeWidth="1.700" /><path d="M17 3L1.500 25M22 5.500L9 25M11 3L5 9" stroke="#1f7fd6" strokeWidth="1.600" /></V>,
];

const Visualizations = () => (
  <section className="flex w-[271px] shrink-0 flex-col border-l border-[#d8d6d4] bg-[#f3f2f1] text-[17.500px] text-[#252423]">
    <div className="flex h-[58px] items-center justify-between pr-[12px] pl-[12px] text-[23px] font-semibold"><span>Visualizations</span><Chevrons /></div>
    <div className="flex h-[22px] items-center pl-[12px] text-[17px] font-semibold">Build visual</div>
    <div className="flex h-[54px] items-start gap-[51px] pt-[6px] pl-[12px]">
      <div className="flex size-12 items-center justify-center rounded-[3px] bg-[#d2d0ce]">
        <svg width="36" height="36" viewBox="0 0 36 36" fill="#117865" stroke="#1b1a19" strokeWidth="1.800">
          <path d="M0 1H29" /><rect x="1" y="9" width="34" height="10" strokeDasharray="2.500 1.800" /><rect x="1" y="25" width="34" height="10" strokeDasharray="2.500 1.800" />
        </svg>
      </div>
      <div className="flex size-12 items-center justify-center">
        <svg width="38" height="38" viewBox="0 0 38 38" fill="none" stroke="#252423" strokeWidth="1.800">
          <path d="M8 36H2V2H17L27.500 12.500V15M17 2V12.500H27.500" />
          <path d="M36.500 14.500L27 29L22.500 25.500Q30 17 36.500 14.500ZM22.500 26Q18 26 17 30Q16 34 10 35Q22 39 26 33Q28 29 22.500 26Z" />
        </svg>
      </div>
    </div>
    <svg width="270" height="14" viewBox="0 0 270 14" fill="none" stroke="#8a8886" strokeWidth="1.500" className="mt-[6px] shrink-0"><path d="M0 13H24L36 1L48 13H270" /></svg>
    <div className="mt-4 grid grid-cols-[repeat(6,28px)] gap-[14px] pl-4">
      {gallery.map((g, i) => <React.Fragment key={i}>{g}</React.Fragment>)}
    </div>
    <div className="mt-[23px] flex gap-[6px] pl-[18px]">
      {[0, 1, 2].map((i) => <span key={i} className="size-[3px] rounded-full bg-[#252423]" />)}
    </div>
    <div className="mt-[28px] border-t border-[#dcdad8]" />
    <div className="mt-[14px] flex h-6 items-center pl-[18px]">Values</div>
    <div className="mt-[7px] ml-[6px] flex h-[43px] w-[255px] items-center rounded-[3px] border border-dashed border-[#bebcba] bg-white pb-0.5 pl-[15px]">Add data fields here</div>
    <div className="mt-[16px] flex h-6 items-center pl-[18px] font-semibold text-[#484644]">Drill through</div>
    <div className="mt-[12px] flex h-6 items-center justify-between pr-[32px] pl-[18px]">
      Cross-report
      <span className="flex h-6 w-12 items-center gap-1 rounded-full border border-[#8a8886] bg-white pl-[6px] text-[13.500px] text-[#605e5c]"><i className="size-3 rounded-full bg-[#605e5c]" />Off</span>
    </div>
    <div className="mt-4 flex h-6 items-center justify-between pr-[32px] pl-[18px]">
      Keep all filters
      <span className="flex h-6 w-12 items-center gap-1 rounded-full bg-[#117865] pl-[7px] text-[13.500px] text-white">On<i className="size-3 rounded-full bg-white" /></span>
    </div>
    <div className="mt-[15px] ml-[6px] flex h-[39px] w-[255px] items-center rounded-[3px] border border-dashed border-[#bebcba] bg-white pl-3 whitespace-nowrap">Add drill-through fields here</div>
  </section>
);

const Sigma = () => (
  <svg width="18" height="20" viewBox="0 0 18 20" fill="none" stroke="#252423" strokeWidth="1.600"><path d="M17 1H1.500L10 9.500L1.500 18.500H17" /></svg>
);
const Calc = () => (
  <svg width="18" height="22" viewBox="0 0 18 22" fill="none" stroke="#252423" strokeWidth="1.600">
    <rect x="0.900" y="0.900" width="16.200" height="20" rx="3" /><rect x="4" y="4" width="10" height="4.500" rx="1.500" />
    <g fill="#252423" stroke="none">{[12, 17].map((y) => [4.8, 9, 13.2].map((x) => <circle key={`${x}${y}`} cx={x} cy={y} r="1.300" />))}</g>
  </svg>
);

const fields: [string, string][] = [
  ["2020 Census Tr...", "s"], ["Avg Range", "c"], ["Base MSRP", "s"], ["City", ""], ["Clean Alternativ...", ""],
  ["DOL Vehicle ID", "s"], ["Electric Range", "s"], ["Electric Utility", ""], ["Electric Vehicle ...", ""], ["Legislative Distr...", "s"],
  ["Make", ""], ["Model", ""], ["Model Year", "s"], ["Postal Code", "s"], ["State", ""], ["Total Vehicles", "c"], ["Vehicle Location", ""],
];

const DataPane = () => (
  <section className="flex w-[270px] shrink-0 flex-col border-l border-[#d8d6d4] bg-[#f3f2f1] text-[17.500px] text-[#323130]">
    <div className="flex h-[58px] items-center justify-between pr-[11px] pl-[12px] text-[23px] font-semibold text-[#252423]"><span>Data</span><Chevrons /></div>
    <div className="mt-[10px] ml-[6px] flex h-9 w-[258px] items-center rounded-[5px] border border-[#d2d0ce] border-b-[#605e5c] bg-white pl-[18px] text-[20px] text-[#706e6c]">
      <svg width="22" height="22" viewBox="0 0 22 22" fill="none" stroke="#605e5c" strokeWidth="1.600" className="mr-[10px]"><circle cx="9" cy="9" r="8" /><path d="M15 15L21 21" /></svg>
      <span className="pt-0.5">Search</span>
    </div>
    <div className="mt-[14px] flex h-9 items-center pl-[19px] whitespace-nowrap">
      <svg width="18" height="10" viewBox="0 0 18 10" fill="none" stroke="#605e5c" strokeWidth="1.500"><path d="M1 1L9 9L17 1" /></svg>
      <svg width="19" height="19" viewBox="0 0 19 19" fill="none" stroke="#252423" strokeWidth="1.600" className="mr-[8px] ml-[6px]"><rect x="1" y="1" width="17" height="17" rx="3.500" /><path d="M6 1V18M13 1V18M1 5.500H18M1 13H18" /></svg>
      <span className="pt-px">Electric_Vehicle_Popul...</span>
    </div>
    {fields.map(([name, kind]) => (
      <div key={name} className="flex h-9 items-center pl-[66px] whitespace-nowrap">
        <span className="size-[18px] rounded-[3px] border border-[#8a8886]" />
        <span className="mr-[9px] ml-3 flex w-[18px] justify-center">{kind === "s" ? <Sigma /> : kind === "c" ? <Calc /> : null}</span>
        <span className="pt-px">{name}</span>
      </div>
    ))}
  </section>
);

const StatusBar = () => (
  <div className="flex h-[35px] shrink-0 items-center border-t border-[#dcdad8] bg-[#f3f2f1] pt-0.5 text-[17.500px] text-[#484644]">
    <span className="pl-[6px] tracking-[0.005em]!">Page 1 of 1</span>
    <svg width="184" height="18" viewBox="0 0 184 18" className="ml-auto" stroke="#605e5c">
      <path d="M0 9H7" strokeWidth="2" /><path d="M14 8.500H164" strokeWidth="1.300" /><path d="M89 5V12" strokeWidth="2" /><path d="M62 0V17" strokeWidth="6" /><path d="M172 8H184M178 2V14" strokeWidth="2" />
    </svg>
    <span className="ml-5 w-[63px] text-[#605e5c]">67%</span>
    <svg width="25" height="18" viewBox="0 0 25 18" fill="none" stroke="#605e5c" strokeWidth="1.500" className="mr-[25px]"><path d="M1 1H24V17H1ZM4 7V4H8M17 4H21V7M21 11V14H17M8 14H4V11" /></svg>
  </div>
);

/* ---------- taskbar ---------- */

const App36 = ({ children }: P) => (
  <svg width="36" height="36" viewBox="0 0 36 36" className="shrink-0 overflow-visible">{children}</svg>
);

const Ganesha = () => (
  <svg width="50" height="40" viewBox="0 0 50 40" className="overflow-visible">
    <g fill="#ecc255">
      {Array.from({ length: 16 }, (_, i) => <path key={i} d="M22 20L25 -2L28 20Z" transform={`rotate(${i * 22.5} 25 20)`} />)}
    </g>
    <path d="M18 10L25 1L32 10L31 14H19Z" fill="#e8913d" /><circle cx="25" cy="8" r="2" fill="#d7406b" />
    <path d="M18 14Q9 12 9 21Q10 29 18 26ZM32 14Q41 12 41 21Q40 29 32 26Z" fill="#df9577" />
    <ellipse cx="25" cy="19" rx="8.500" ry="9" fill="#f1b293" />
    <path d="M21 20L20 32Q21 39 27 39Q31 37 28 33L30 20Z" fill="#e9a182" />
    <path d="M19 15L23 17M31 15L27 17" stroke="#5a2a22" strokeWidth="1.300" /><circle cx="21.500" cy="18.500" r="1" fill="#2a1713" /><circle cx="28.500" cy="18.500" r="1" fill="#2a1713" />
    <path d="M24 10H26V15H24Z" fill="#c53b2f" />
  </svg>
);

const Taskbar = () => (
  <footer className="flex h-[72px] shrink-0 items-start border-t border-black bg-[linear-gradient(to_right,#1b2438_0%,#14253d_12%,#15253c_32%,#22222e_42%,#1f222e_60%,#1a252d_85%,#20222e_100%)] text-[18px] text-white">
    <div className="flex h-[71px] w-full items-center border-t-2 border-[#3c424c]">
      <div className="relative ml-[29px] h-[46px] w-[32px]">
        <svg width="32" height="46" viewBox="0 0 32 46">
          <defs><linearGradient id="umb" x1="0" y1="0" x2="1" y2="1"><stop offset="0" stopColor="#9ccbf7" /><stop offset="1" stopColor="#2c82d8" /></linearGradient></defs>
          <path d="M15.500 24V37Q15 41 12.500 41Q10 41 9.500 38" fill="none" stroke="#7d7a80" strokeWidth="2.500" />
          <path d="M1 27Q3 14 16 13Q28 14 31 27Q28 24 25 27Q22 24 19 27Q15.500 24 12 27Q9 24 7 27Q4 24 1 27Z" fill="url(#umb)" />
        </svg>
        <span className="absolute -top-[4px] left-[16px] flex size-6 items-center justify-center rounded-full bg-[#ff8f9c] text-[17px] text-[#22161a]">2</span>
      </div>
      <div className="mb-0.5 ml-[15px] w-[467px] leading-6"><div>2 cm of rain</div><div className="text-[#b9bec8]">Friday</div></div>
      <App36>
        <defs><linearGradient id="win" x1="0" y1="0" x2="1" y2="1"><stop offset="0" stopColor="#86dcff" /><stop offset="1" stopColor="#0896f8" /></linearGradient></defs>
        <path d="M0 0H17V17H0ZM18.500 0H35V17H18.500ZM0 18.500H17V35.500H0ZM18.500 18.500H35V35.500H18.500Z" fill="url(#win)" />
      </App36>
      <div className="ml-[19px] flex h-12 w-[330px] items-center rounded-full border border-[#50596a] bg-[linear-gradient(to_right,#333f53,#423f4b)] pl-[17px] text-[19px] text-[#d5d8dd]">
        <svg width="24" height="24" viewBox="0 0 24 24" fill="none" stroke="#e8eaee" strokeWidth="2.300" strokeLinecap="round"><circle cx="10" cy="10" r="8" /><path d="M16 16L22 22" /></svg>
        <span className="ml-[14px] w-[207px]">Search</span>
        <Ganesha />
      </div>
      <div className="ml-[18px] flex items-center gap-[30px]">
        <App36>
          <defs><linearGradient id="tv" x1="0" y1="0" x2="1" y2="1"><stop offset="0" stopColor="#fff" /><stop offset="1" stopColor="#dcdcdc" /></linearGradient></defs>
          <rect x="0" y="10" width="27" height="25" rx="2" fill="#616161" /><rect x="9" y="1" width="27" height="25" rx="2" fill="url(#tv)" /><rect x="9" y="10" width="18" height="16" fill="#b5b5b5" />
        </App36>
        <App36>
          <circle cx="18" cy="18" r="18" fill="#fff" />
          <path d="M18 0A18 18 0 0 1 33.600 9H18A9 9 0 0 0 10.200 13.500L2.400 9A18 18 0 0 1 18 0Z" fill="#e33b2e" />
          <path d="M33.600 9A18 18 0 0 1 18 36L25.800 22.500A9 9 0 0 0 25.800 13.500L18 9Z" fill="#fcc934" />
          <path d="M2.400 9A18 18 0 0 0 18 36L25.800 22.500A9 9 0 0 1 10.200 22.500Z" fill="#2da14c" />
          <circle cx="18" cy="18" r="9" fill="#fff" /><circle cx="18" cy="18" r="7" fill="#2f7bf0" />
        </App36>
        <div className="relative">
          <App36>
            <path d="M2 34L4.500 25.500A15.500 15.500 0 1 1 10.500 31.500Z" fill="none" stroke="#25d366" strokeWidth="3.200" strokeLinejoin="round" />
            <path d="M11 11Q13 8.500 14.500 11L16 14Q16 15 14.500 16.500Q16.500 20.500 20.500 22Q22.500 19.500 23.500 20L26.500 21.500Q27.500 22.500 26 25Q23 28 17 24.500Q10 20 9.500 15Q9.500 12.500 11 11Z" fill="#25d366" />
          </App36>
          <span className="absolute -top-[7px] left-[20px] flex size-6 items-center justify-center rounded-full bg-[#dea0e6] text-[16px] text-[#1d1020]">1</span>
        </div>
        <div className="relative">
          <App36>
            <path d="M0 4Q0 2 2 2H11L14 5V12H0Z" fill="#e0a11a" /><path d="M0 8H12L15 5H34Q36 5 36 7V33Q36 35 34 35H2Q0 35 0 33Z" fill="#ffcb3d" />
            <path d="M6 35V27Q6 24 9 24H27Q30 24 30 27V35Z" fill="#1677cf" /><path d="M10 29H25" stroke="#0c4f96" strokeWidth="2" />
          </App36>
          <i className="absolute top-[42px] left-[13px] h-[5px] w-[10px] rounded-full bg-[#9a9ca3]" />
        </div>
        <App36>
          <rect width="36" height="36" rx="5" fill="#000" />
          <path d="M6 21V24M12 15V25M18 8V25M24 13V25M30 19V24" stroke="#fff" strokeWidth="3" strokeLinecap="round" />
        </App36>
        <App36>
          <path d="M0 0H19L32 4L33 18L28 30L4 36Z" fill="#21d789" /><path d="M0 0H18L10 24L0 26Z" fill="#0fb5f5" /><path d="M25 14L34 11L36 28L30 35L12 34Z" fill="#f3ec2d" />
          <rect x="7" y="7" width="22" height="22" fill="#000" /><text x="9" y="18.500" fontFamily="Open Sans" fontSize="11" fontWeight="700" fill="#fff">PC</text><path d="M10 25.500H18" stroke="#fff" strokeWidth="1.800" />
        </App36>
      </div>
      <div className="relative ml-[18px] flex h-[60px] w-[60px] items-center justify-center rounded-[5px] border border-[#343b45] bg-[#2b3039]">
        <svg width="28" height="36" viewBox="0 0 28 36">
          <defs>
            <linearGradient id="pb1" x1="0" y1="0" x2="0" y2="1"><stop offset="0" stopColor="#e6ad10" /><stop offset="1" stopColor="#c87e0e" /></linearGradient>
            <linearGradient id="pb2" x1="0" y1="0" x2="0" y2="1"><stop offset="0" stopColor="#f6d751" /><stop offset="1" stopColor="#e6ad10" /></linearGradient>
            <linearGradient id="pb3" x1="0" y1="0" x2="0" y2="1"><stop offset="0" stopColor="#f9e589" /><stop offset="1" stopColor="#f6d751" /></linearGradient>
          </defs>
          <rect x="15" y="0" width="13" height="36" rx="1" fill="url(#pb1)" /><rect x="8" y="9" width="12" height="27" rx="1" fill="url(#pb2)" /><rect x="0" y="18" width="12" height="18" rx="1" fill="url(#pb3)" />
        </svg>
        <i className="absolute bottom-0 left-[17px] h-[5px] w-6 rounded-full bg-[#dea0e0]" />
      </div>
      <div className="ml-auto flex items-center pr-[28px]">
        <svg width="16" height="10" viewBox="0 0 16 10" fill="none" stroke="#fff" strokeWidth="2" strokeLinecap="round"><path d="M1 9L8 1.500L15 9" /></svg>
        <svg width="24" height="16" viewBox="0 0 24 16" className="ml-[28px]"><path d="M6 4Q10 -1 15 1Q18 3 19 6L10 12Z" fill="#8f9094" /><path d="M5 15Q0 15 0 10Q1 5 6 5Q10 5 13 8L5 15Z" fill="#c5c6c9" /><path d="M4 15L14 8Q17 5 20 7Q24 8 24 12Q23 15 19.500 15.500H5Z" fill="#fff" /></svg>
        <div className="ml-[26px] flex w-[38px] flex-col items-center text-[17.500px] leading-6"><div>ENG</div><div>IN</div></div>
        <svg width="24" height="18" viewBox="0 0 24 18" fill="none" stroke="#fff" strokeWidth="2" className="ml-[26px]">
          <path d="M0.500 7Q12 -5 23.500 7" stroke="#565b63" /><path d="M3.500 9.500Q12 1 20.500 9.500M7 12.500Q12 7.500 17 12.500" /><circle cx="12" cy="15.500" r="2.300" fill="#fff" stroke="none" />
        </svg>
        <svg width="26" height="20" viewBox="0 0 26 20" fill="none" stroke="#fff" strokeWidth="1.600" className="ml-[12px]"><path d="M1 7H5L10.500 2V18L5 13H1ZM14 6.500Q16.500 10 14 13.500M17.500 4Q21.500 10 17.500 16M21 1.500Q27 10 21 18.500" /></svg>
        <svg width="26" height="22" viewBox="0 0 26 22" fill="none" stroke="#fff" strokeWidth="1.700" className="ml-[10px]"><path d="M8 5H19Q22 5 22 8V16Q22 19 19 19H5Q2 19 2 16V13" /><path d="M9 8H19V16H5L9 11Z" fill="#fff" /><path d="M24 9V15" strokeWidth="3" /><path d="M4 1L1 8H4L3 13L8 6H5L6.500 1Z" fill="#fff" stroke="none" /></svg>
        <div className="mb-0.5 ml-[10px] w-[106px] text-right leading-6"><div className="tracking-[0]!">13:30</div><div className="tracking-[0]!">27-08-2025</div></div>
      </div>
    </div>
  </footer>
);

export default function App() {
  return (
    <div className="flex h-[1199px] w-[1919px] flex-col overflow-hidden bg-white font-['Open_Sans','Noto_Sans',sans-serif] **:tracking-[-0.008em]">
      <TitleBar />
      <div className="z-10 flex h-[189px] shrink-0 flex-col bg-[#fafafa] shadow-[0_2px_6px_rgba(0,0,0,0.220)]">
        <TabBar />
        <Ribbon />
      </div>
      <main className="flex h-[852px] shrink-0">
        <Rail />
        <div className="flex w-[1317px] shrink-0 flex-col">
          <div className="flex">
            <div className="w-[1268px]"><Canvas /></div>
            <Filters />
          </div>
          <PageTabs />
        </div>
        <Visualizations />
        <DataPane />
      </main>
      <StatusBar />
      <Taskbar />
    </div>
  );
}
